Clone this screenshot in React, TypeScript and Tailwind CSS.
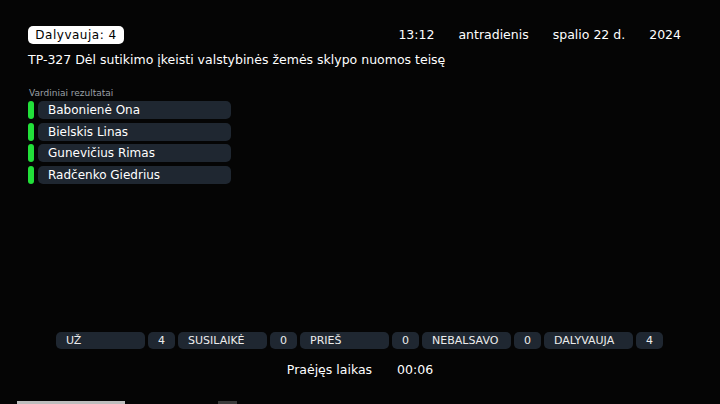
const names = ['Babonienė Ona', 'Bielskis Linas', 'Gunevičius Rimas', 'Radčenko Giedrius'];

const tally = [
  { label: 'UŽ', value: 4 },
  { label: 'SUSILAIKĖ', value: 0 },
  { label: 'PRIEŠ', value: 0 },
  { label: 'NEBALSAVO', value: 0 },
  { label: 'DALYVAUJA', value: 4 },
];

export default function App() {
  return (
    <div
      className="w-[720px] h-[404px] bg-[#050505] text-white flex flex-col overflow-hidden relative"
      style={{ fontFamily: '"DejaVu Sans", Verdana, sans-serif' }}
    >
      {/* viršutinė eilutė */}
      <div className="flex items-center pl-[28px] pt-[26px] h-[44px]">
        <div className="w-[96px] h-[18px] bg-white rounded-[5px] text-black text-[12px] flex items-center justify-center tracking-[0.5px]">
          Dalyvauja: 4
        </div>
        <div className="ml-auto mr-[39px] flex items-center text-[12.5px] gap-[24px]">
          <span>13:12</span>
          <span>antradienis</span>
          <span>spalio 22 d.</span>
          <span>2024</span>
        </div>
      </div>

      <div className="pl-[28px] mt-[7px] text-[12.5px] leading-[18px]">
        TP-327 Dėl sutikimo įkeisti valstybinės žemės sklypo nuomos teisę
      </div>

      {/* vardiniai rezultatai */}
      <div className="pl-[29px] mt-[19px] text-[9px] leading-[10px] text-[#9aa0a6]">Vardiniai rezultatai</div>
      <div className="pl-[28px] mt-[3px] flex flex-col gap-[3.5px]">
        {names.map(n => (
          <div key={n} className="flex items-center h-[18px] gap-[4px]">
            <div className="w-[6px] h-[18px] rounded-full bg-[#22e03a]" />
            <div className="w-[193px] h-[18px] rounded-[5px] bg-[#1f2731] text-[12px] pl-[10px] flex items-center">{n}</div>
          </div>
        ))}
      </div>

      {/* suvestinė */}
      <div className="mt-auto flex flex-col items-center">
        <div className="flex items-center gap-[3px] pl-[56px] self-start">
          {tally.map(t => (
            <div key={t.label} className="flex items-center gap-[3px]">
              <div className="w-[89px] h-[17px] rounded-[5px] bg-[#1f2731] text-[11px] pl-[10px] flex items-center text-[#ececec]">{t.label}</div>
              <div className="w-[27px] h-[17px] rounded-[5px] bg-[#1f2731] text-[11px] flex items-center justify-center text-[#ececec]">{t.value}</div>
            </div>
          ))}
        </div>
        <div className="flex items-center gap-[25px] text-[12.5px] mt-[12px] mb-[24px]">
          <span>Praėjęs laikas</span>
          <span>00:06</span>
        </div>
      </div>

      {/* apatinė juosta */}
      <div className="absolute bottom-0 left-[17px] w-[108px] h-[3px] bg-[#bdbdbd]" />
      <div className="absolute bottom-0 left-[218px] w-[19px] h-[3px] bg-[#3a3a3a]" />
    </div>
  );
}
